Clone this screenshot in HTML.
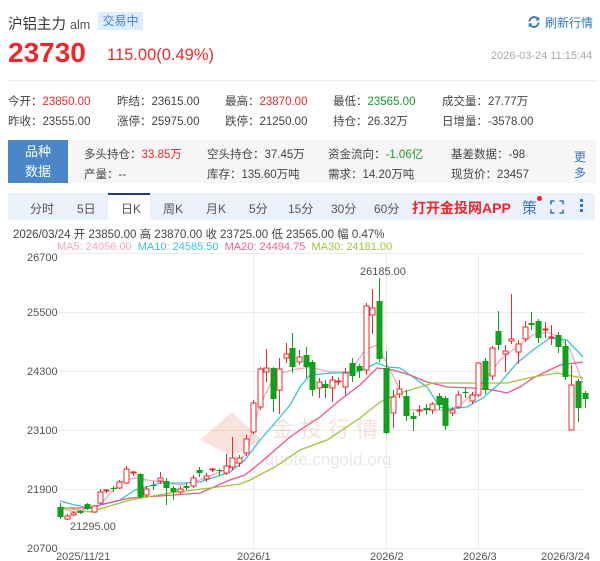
<!DOCTYPE html>
<html><head><meta charset="utf-8"><style>
*{margin:0;padding:0;box-sizing:border-box}
body{width:600px;height:561px;background:#fff;font-family:"Liberation Sans","Noto Sans CJK SC",sans-serif;position:relative;overflow:hidden;color:#333}
.a{position:absolute;white-space:nowrap}
.r{color:#f0262a}.g{color:#1a9a2a}
.s{font-size:11.5px;color:#444}
.t{font-size:12px;color:#555;top:200px}
</style></head><body>
<div class="a" style="left:8px;top:13px;font-size:14.5px;color:#333">沪铝主力 <span style="font-size:12.5px;color:#555">alm</span></div>
<div class="a" style="left:98px;top:12px;width:45px;height:18px;background:#ddedfd;color:#3d82d6;font-size:12px;line-height:18px;text-align:center">交易中</div>
<svg class="a" style="left:527px;top:15px" width="14" height="14" viewBox="0 0 14 14"><path d="M2.5 6.5A4.6 4.6 0 0 1 11 4.3M11.5 7.5A4.6 4.6 0 0 1 3 9.7" stroke="#2f7ad0" stroke-width="2" fill="none"/><path d="M12.3 1.8V5.6H8.6Z M1.7 12.2V8.4H5.4Z" fill="#2f7ad0"/></svg>
<div class="a" style="left:545px;top:14px;font-size:12px;color:#2f7ad0">刷新行情</div>
<div class="a r" style="left:8px;top:37px;font-size:28px;font-weight:bold">23730</div>
<div class="a r" style="left:107px;top:46px;font-size:16.5px">115.00(0.49%)</div>
<div class="a" style="left:491px;top:50px;font-size:11px;color:#aaa">2026-03-24 11:15:44</div>
<div class="a" style="left:8px;top:80px;width:588px;height:1px;background:#eee"></div>
<div class="a s" style="left:8px;top:93px">今开：<span class="r">23850.00</span></div>
<div class="a s" style="left:117px;top:93px">昨结：23615.00</div>
<div class="a s" style="left:225px;top:93px">最高：<span class="r">23870.00</span></div>
<div class="a s" style="left:333px;top:93px">最低：<span class="g">23565.00</span></div>
<div class="a s" style="left:442px;top:93px">成交量：27.77万</div>
<div class="a s" style="left:8px;top:113px">昨收：23555.00</div>
<div class="a s" style="left:117px;top:113px">涨停：25975.00</div>
<div class="a s" style="left:225px;top:113px">跌停：21250.00</div>
<div class="a s" style="left:333px;top:113px">持仓：26.32万</div>
<div class="a s" style="left:442px;top:113px">日增量：-3578.00</div>
<div class="a" style="left:8px;top:140px;width:588px;height:43px;background:#f6f6f6"></div>
<div class="a" style="left:8px;top:140px;width:60px;height:43px;background:#4a86c9;color:#fff;font-size:13px;line-height:20px;text-align:center;padding-top:2px;white-space:normal">品种<br>数据</div>
<div class="a s" style="left:84px;top:146px">多头持仓：<span class="r">33.85万</span></div>
<div class="a s" style="left:207px;top:146px">空头持仓：37.45万</div>
<div class="a s" style="left:328px;top:146px">资金流向：<span class="g">-1.06亿</span></div>
<div class="a s" style="left:451px;top:146px">基差数据：-98</div>
<div class="a s" style="left:84px;top:166px">产量：--</div>
<div class="a s" style="left:207px;top:166px">库存：135.60万吨</div>
<div class="a s" style="left:328px;top:166px">需求：14.20万吨</div>
<div class="a s" style="left:451px;top:166px">现货价：23457</div>
<div class="a" style="left:574px;top:149px;font-size:12px;color:#3d75c0;line-height:16px;white-space:normal;width:12px">更多</div>
<div class="a" style="left:8px;top:193px;width:587px;height:27px;background:#eaf1fa"></div>
<div class="a" style="left:108px;top:193px;width:42px;height:28px;background:#fff;border-top:2px solid #1d3f8a"></div>
<div class="a t" style="left:30px">分时</div>
<div class="a t" style="left:77px">5日</div>
<div class="a t" style="left:121px">日K</div>
<div class="a t" style="left:163px">周K</div>
<div class="a t" style="left:206px">月K</div>
<div class="a t" style="left:249px">5分</div>
<div class="a t" style="left:288px">15分</div>
<div class="a t" style="left:331px">30分</div>
<div class="a t" style="left:374px">60分</div>
<div class="a" style="left:412px;top:198px;font-size:14px;font-weight:bold;color:#f0262a">打开金投网APP</div>
<div class="a" style="left:522px;top:197px;font-size:15px;color:#3d75c0">策</div>
<div class="a" style="left:537px;top:196px;width:5px;height:5px;border-radius:50%;background:#e8232a"></div>
<svg class="a" style="left:550px;top:200px" width="14" height="14"><path d="M1 4.5V1H4.5M9.5 1H13V4.5M13 9.5V13H9.5M4.5 13H1V9.5" stroke="#3d75c0" stroke-width="1.6" fill="none"/></svg>
<div class="a" style="left:580px;top:199px;width:3px;height:3px;background:#3d75c0;box-shadow:0 5px #3d75c0,0 10px #3d75c0"></div>
<div class="a" style="left:13px;top:226px;font-size:11.5px;color:#444">2026/03/24 开 23850.00 高 23870.00 收 23725.00 低 23565.00 幅 0.47%</div>
<div class="a" style="left:57px;top:241px;font-size:11px"><span style="color:#f5a5bd">MA5: 24056.00</span>&nbsp; <span style="color:#3cc0dc">MA10: 24585.50</span>&nbsp; <span style="color:#f0608a">MA20: 24494.75</span>&nbsp; <span style="color:#9cc43a">MA30: 24181.00</span></div>
<svg class="a" style="left:0;top:0" width="600" height="561">
<g stroke="#ececec" stroke-width="1">
<line x1="55" y1="253.5" x2="586" y2="253.5"/><line x1="55" y1="312.5" x2="586" y2="312.5"/><line x1="55" y1="371.5" x2="586" y2="371.5"/><line x1="55" y1="430.5" x2="586" y2="430.5"/><line x1="55" y1="489.5" x2="586" y2="489.5"/><line x1="55" y1="548.5" x2="586" y2="548.5"/>
<line x1="253.5" y1="253" x2="253.5" y2="548"/><line x1="386.5" y1="253" x2="386.5" y2="548"/><line x1="478.5" y1="253" x2="478.5" y2="548"/>
</g>
<g font-family="Liberation Sans,sans-serif" font-size="11" fill="#555">
<text x="27" y="261">26700</text><text x="27" y="316">25500</text><text x="27" y="375">24300</text><text x="27" y="434">23100</text><text x="27" y="493">21900</text><text x="27" y="552">20700</text>
<text x="56" y="560">2025/11/21</text><text x="237" y="560">2026/1</text><text x="370" y="560">2026/2</text><text x="463" y="560">2026/3</text><text x="541" y="560">2026/3/24</text>
<text x="360" y="275">26185.00</text><text x="70" y="530">21295.00</text>
</g>
<g opacity="0.18">
<path d="M232 412 L200 440 L232 456 L262 440 Z" fill="#d8603c"/>
<text x="272" y="437" font-size="22" fill="#d8603c" font-family="Noto Sans CJK SC,sans-serif" letter-spacing="6">金投行情</text>
</g>
<text x="265" y="465" font-size="17" fill="#e8e8e8" font-family="Liberation Sans,sans-serif">quote.cngold.org</text>
<g fill="none" stroke-width="1.3">
<polyline stroke="#f5a5bd" points="60,508 75,512 100,505 120,482 135,478 160,482 180,485 200,480 230,468 245,455 260,405 275,375 292,370 310,367 330,372 350,372 365,350 377,345 385,360 400,390 410,410 433,410 450,410 460,405 477,390 490,373 500,360 513,350 533,335 547,332 560,337 570,350 583,383"/>
<polyline stroke="#3cc0dc" points="60,501 75,505 90,508 100,505 120,500 135,490 160,483 185,483 200,482 230,472 245,460 260,440 275,423 290,405 300,387 310,375 333,373 357,372 377,363 387,367 400,368 413,377 427,387 440,407 450,409 467,407 483,398 500,383 517,363 533,350 550,338 567,340 583,357"/>
<polyline stroke="#ef5585" points="60,508 90,508 100,505 130,498 160,496 200,493 230,480 245,475 260,463 275,450 290,437 300,430 320,417 340,400 360,385 377,368 393,370 410,375 427,382 447,387 473,388 493,390 507,393 520,387 533,378 560,365 583,362"/>
<polyline stroke="#9cc43a" points="60,507 90,512 130,500 170,493 210,488 240,484 250,480 275,467 300,450 327,440 360,418 380,402 400,393 433,383 450,383 487,383 507,383 533,377 557,373 567,375 583,378"/>
</g>
<g id="c"></g>
</svg>
<script>
var C=[[60,'g',507,517,503,519],[67,'r',516,519,514,520],[73,'r',513,515,511,516],[80,'g',511,513,510,514],[87,'g',504,509,503,510],[94,'r',506,512,505,513],[100,'r',492,503,489,504],[106,'r',490,491,489,493],[113,'g',488,489,486,492],[119,'r',482,488,480,489],[126,'r',469,483,466,484],[133,'r',472,473,471,476],[140,'g',474,497,473,498],[146,'r',489,495,486,497],[153,'g',485,486,481,490],[160,'r',478,481,472,484],[166,'g',481,488,478,505],[173,'g',488,492,486,500],[180,'r',489,492,486,494],[186,'g',486,488,483,490],[193,'r',478,486,475,488],[199,'g',470,473,467,477],[206,'r',476,479,473,482],[212,'r',469,470,468,472],[219,'g',470,471,469,476],[226,'r',466,473,454,475],[232,'r',458,467,437,470],[239,'r',458,463,455,467],[246,'r',439,453,435,456],[253,'r',403,432,400,434],[260,'r',369,407,367,410],[266,'r',368,372,349,382],[273,'g',368,399,367,412],[279,'r',369,390,358,414],[286,'r',354,358,343,363],[292,'g',348,367,333,373],[299,'r',357,362,350,365],[306,'g',355,367,347,378],[312,'g',362,390,360,396],[319,'r',382,388,378,398],[325,'g',384,388,380,398],[332,'r',380,388,376,402],[338,'r',381,382,378,385],[345,'r',373,387,368,395],[352,'g',363,376,358,382],[359,'g',366,371,364,378],[366,'r',306,370,303,375],[372,'r',308,315,289,334],[379,'g',301,359,278,362],[386,'g',368,433,351,434],[393,'r',397,413,390,428],[399,'r',389,394,380,398],[406,'g',396,416,390,421],[413,'g',416,419,412,431],[419,'r',410,411,405,416],[426,'g',408,410,404,415],[432,'r',404,410,402,414],[439,'g',396,405,393,410],[445,'g',398,426,396,430],[452,'r',410,413,407,416],[458,'r',395,407,391,409],[465,'g',392,393,388,398],[472,'r',395,401,392,404],[478,'r',363,395,362,397],[485,'g',361,390,358,394],[492,'r',348,376,346,380],[498,'g',331,345,311,350],[505,'r',351,354,345,372],[511,'r',339,341,294,344],[518,'r',344,352,340,364],[525,'r',327,339,321,342],[531,'g',323,325,312,330],[538,'g',321,338,319,343],[545,'r',329,330,322,338],[551,'r',337,338,325,345],[558,'g',335,347,332,353],[565,'g',346,377,340,380],[571,'r',385,430,365,430],[578,'g',381,408,379,422],[585,'g',393,399,391,408]];
var s='';C.forEach(function(c){var col=c[1]=='r'?'#f0262a':'#0fa01c';var x=c[0],t=c[2],b=c[3];if(b-t<1)b=t+1;
s+='<line x1="'+(x+.5)+'" y1="'+c[4]+'" x2="'+(x+.5)+'" y2="'+c[5]+'" stroke="'+col+'"/>';
if(c[1]=='r')s+='<rect x="'+(x-2)+'" y="'+t+'" width="5" height="'+(b-t)+'" fill="#fff" stroke="'+col+'"/>';
else s+='<rect x="'+(x-2.5)+'" y="'+t+'" width="6" height="'+(b-t)+'" fill="'+col+'"/>';});
document.getElementById('c').innerHTML=s;
</script>
</body></html>
